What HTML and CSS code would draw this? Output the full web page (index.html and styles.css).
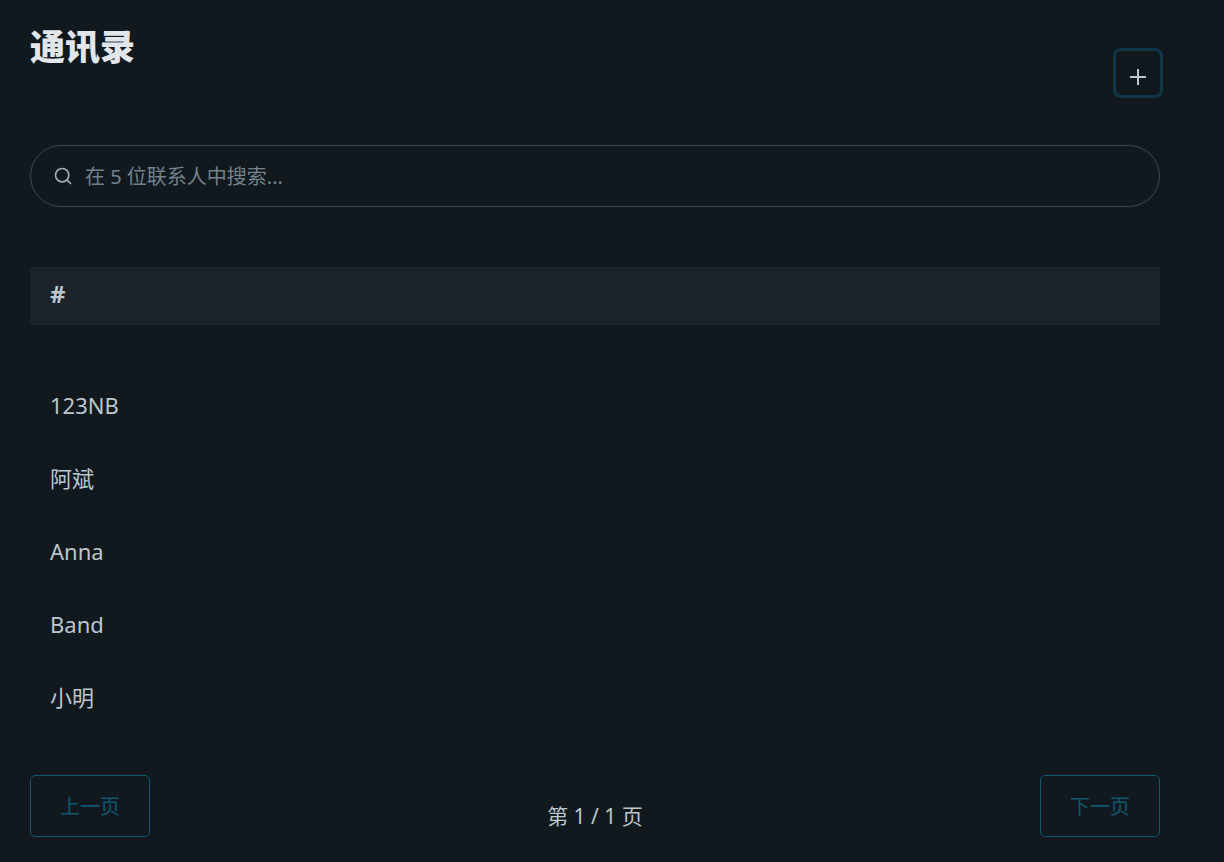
FILE: index.html
```html
<!DOCTYPE html>
<html lang="zh-CN">
<head>
    <meta charset="UTF-8">
    <meta name="viewport" content="width=device-width, initial-scale=1.0">
    <title>通讯录</title>
    <link rel="stylesheet" href="styles.css">
</head>
<body>
    <main class="container">
        <header class="header">
            <h1>通讯录</h1>
            <button class="btn-add" type="button" aria-label="添加联系人">
                <svg width="24" height="24" viewBox="0 0 24 24" fill="none" stroke="currentColor" stroke-width="2">
                    <path d="M12 4v16M4 12h16"/>
                </svg>
            </button>
        </header>

        <!-- Search Section -->
        <form class="search" role="search">
            <svg width="20" height="20" viewBox="0 0 24 24" fill="none" stroke="currentColor" stroke-width="2" stroke-linecap="round" stroke-linejoin="round">
                <circle cx="11" cy="11" r="8"/>
                <path d="M21 21l-4-4"/>
            </svg>
            <input type="search" aria-label="搜索联系人" placeholder="在 5 位联系人中搜索...">
        </form>

        <!-- Contact List -->
        <section>
            <h2 class="group-title">#</h2>
            <ul class="contacts">
                <li>123NB</li>
                <li>阿斌</li>
                <li>Anna</li>
                <li>Band</li>
                <li>小明</li>
            </ul>
        </section>

        <nav class="pagination">
            <button class="btn-page" type="button" disabled>上一页</button>
            <span class="page-info">第 1 / 1 页</span>
            <button class="btn-page" type="button" disabled>下一页</button>
        </nav>
    </main>
</body>
</html>
```

FILE: styles.css
```css
* {
    box-sizing: border-box;
}
body {
    margin: 0;
    background-color: #11191f;
    color: #bbc6ce;
    font-family: "Noto Sans", "Noto Sans CJK SC", sans-serif;
    font-size: 20px;
    line-height: 30px;
}
button, input {
    font: inherit;
}
.container {
    padding: 26px 64px 25px 30px;
}
.header {
    display: flex;
    justify-content: space-between;
    align-items: flex-start;
    margin-bottom: 50px;
}
h1 {
    margin: 0;
    color: #e1e6eb;
    font-size: 35px;
    line-height: 42px;
    font-weight: 900;
}
.btn-add {
    width: 44px;
    height: 44px;
    margin-top: 25px;
    padding: 8px 0 0;
    display: flex;
    justify-content: center;
    align-items: center;
    border: none;
    border-radius: 5px;
    background-color: transparent;
    color: #bbc6ce;
    box-shadow: 0 0 0 3px rgba(16, 149, 193, 0.25);
    cursor: pointer;
}
.search {
    display: flex;
    align-items: center;
    gap: 12px;
    height: 62px;
    margin-bottom: 60px;
    padding: 0 22px;
    border: 1px solid #374956;
    border-radius: 31px;
    color: #a2afb9;
}
.search input {
    flex: 1;
    min-width: 0;
    padding: 2px 0 0;
    border: none;
    outline: none;
    background-color: transparent;
    color: #bbc6ce;
    appearance: none;
}
.search input::placeholder {
    color: #73828c;
    opacity: 1;
}
.group-title {
    margin: 0 0 44px;
    padding: 12px 20px 16px;
    background-color: #1b2229;
    font-size: 24px;
    line-height: 30px;
    font-weight: 700;
}
.contacts {
    margin: 0 0 41px;
    padding: 0;
    list-style: none;
}
.contacts li {
    padding: 20px;
    font-size: 22px;
    line-height: 33px;
}
.pagination {
    display: flex;
    justify-content: space-between;
    align-items: flex-start;
}
.page-info {
    margin-top: 26px;
    font-size: 21px;
}
.btn-page {
    padding: 16px 29px 14px;
    border: 1px solid #1095c1;
    border-radius: 5px;
    background-color: transparent;
    color: #1095c1;
    opacity: 0.5;
}
```
